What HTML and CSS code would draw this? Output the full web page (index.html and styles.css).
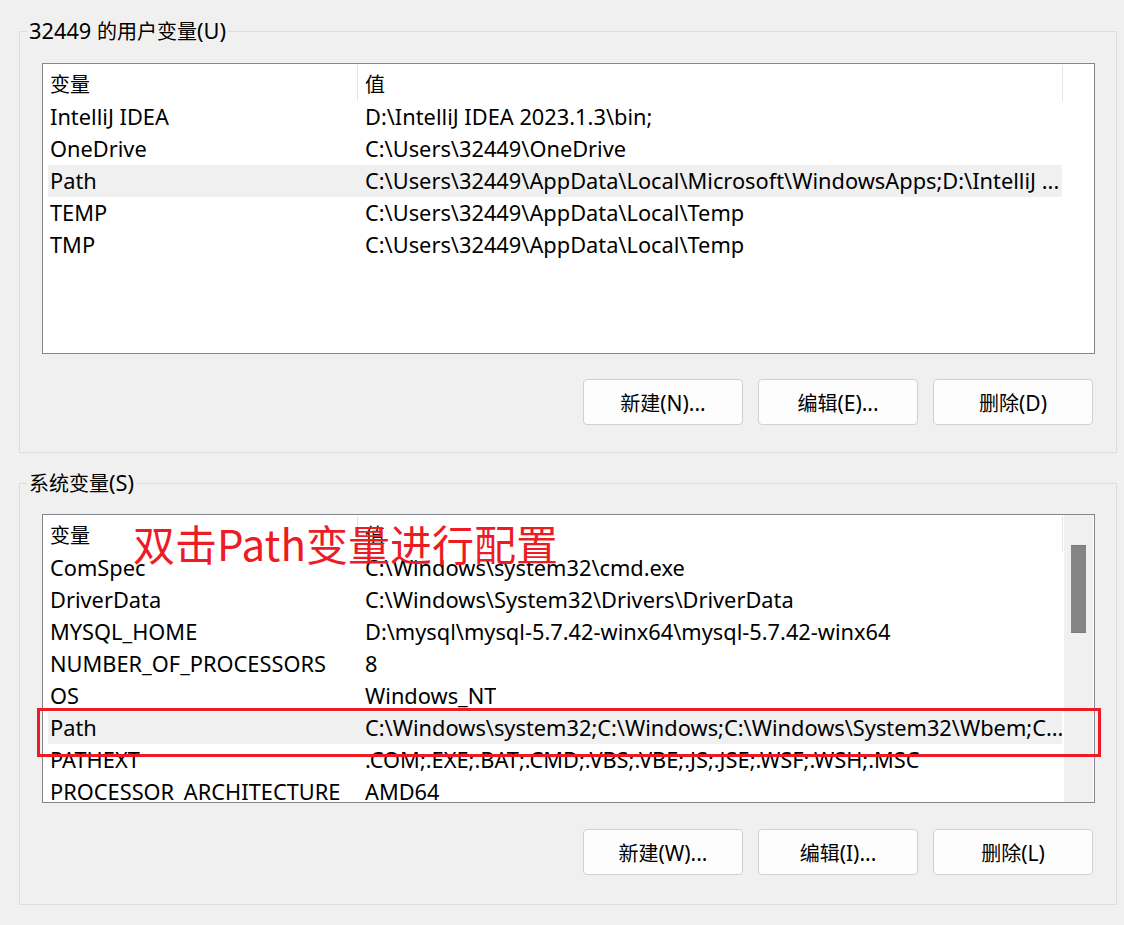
FILE: index.html
```html
<!DOCTYPE html>
<html lang="zh-CN">
<head>
<meta charset="utf-8">
<title>环境变量</title>
<link rel="stylesheet" href="styles.css">
</head>
<body>
<div class="page">
  <fieldset class="group group-user">
    <legend class="legend">32449 <span class="cjk">的用户变量</span>(U)</legend>
    <div class="listwrap">
      <div class="list list-user">
        <div class="list-body">
          <div class="header">
            <div class="hcell hcol1 cjk">变量</div>
            <div class="hcell hcol2 cjk">值</div>
            <div class="hfill"></div>
          </div>
          <div class="row"><span class="c1">IntelliJ IDEA</span><span class="c2">D:\IntelliJ IDEA 2023.1.3\bin;</span></div>
          <div class="row"><span class="c1">OneDrive</span><span class="c2">C:\Users\32449\OneDrive</span></div>
          <div class="row selected"><span class="c1">Path</span><span class="c2">C:\Users\32449\AppData\Local\Microsoft\WindowsApps;D:\IntelliJ ...</span></div>
          <div class="row"><span class="c1">TEMP</span><span class="c2">C:\Users\32449\AppData\Local\Temp</span></div>
          <div class="row"><span class="c1">TMP</span><span class="c2">C:\Users\32449\AppData\Local\Temp</span></div>
        </div>
      </div>
    </div>
    <div class="buttons">
      <button class="btn"><span class="cjk">新建</span>(N)...</button>
      <button class="btn"><span class="cjk">编辑</span>(E)...</button>
      <button class="btn"><span class="cjk">删除</span>(D)</button>
    </div>
  </fieldset>

  <fieldset class="group group-sys">
    <legend class="legend"><span class="cjk">系统变量</span>(S)</legend>
    <div class="listwrap">
      <div class="list list-sys">
        <div class="list-body">
          <div class="header">
            <div class="hcell hcol1 cjk">变量</div>
            <div class="hcell hcol2 cjk">值</div>
            <div class="hfill"></div>
          </div>
          <div class="row"><span class="c1">ComSpec</span><span class="c2">C:\Windows\system32\cmd.exe</span></div>
          <div class="row"><span class="c1">DriverData</span><span class="c2">C:\Windows\System32\Drivers\DriverData</span></div>
          <div class="row"><span class="c1">MYSQL_HOME</span><span class="c2">D:\mysql\mysql-5.7.42-winx64\mysql-5.7.42-winx64</span></div>
          <div class="row"><span class="c1">NUMBER_OF_PROCESSORS</span><span class="c2">8</span></div>
          <div class="row"><span class="c1">OS</span><span class="c2">Windows_NT</span></div>
          <div class="row selected"><span class="c1">Path</span><span class="c2">C:\Windows\system32;C:\Windows;C:\Windows\System32\Wbem;C...</span></div>
          <div class="row"><span class="c1">PATHEXT</span><span class="c2">.COM;.EXE;.BAT;.CMD;.VBS;.VBE;.JS;.JSE;.WSF;.WSH;.MSC</span></div>
          <div class="row"><span class="c1">PROCESSOR_ARCHITECTURE</span><span class="c2">AMD64</span></div>
        </div>
        <div class="scrollbar"><div class="thumb"></div></div>
      </div>
      <div class="note">双击Path变量进行配置</div>
      <div class="redbox"></div>
    </div>
    <div class="buttons">
      <button class="btn"><span class="cjk">新建</span>(W)...</button>
      <button class="btn"><span class="cjk">编辑</span>(I)...</button>
      <button class="btn"><span class="cjk">删除</span>(L)</button>
    </div>
  </fieldset>
</div>
</body>
</html>
```

FILE: styles.css
```css
html, body {
  margin: 0;
  padding: 0;
  background: #f0f0f0;
}
body {
  font-family: "Noto Sans", "Noto Sans CJK SC", sans-serif;
  font-size: 21.8px;
  color: #000;
}
.cjk {
  font-family: "Noto Sans CJK SC", sans-serif;
  font-size: 20px;
}
.page {
  padding: 19px 0 0 19px;
}
.group {
  box-sizing: border-box;
  width: 1098px;
  margin: 0;
  border: 1px solid #dcdcdc;
  padding: 20px 21px 27px 22px;
  min-width: 0;
}
.group-sys {
  margin-top: 18px;
  padding-top: 19px;
  padding-bottom: 29px;
}
.legend {
  margin-left: -15px;
  padding: 0 2px;
  line-height: 24px;
  height: 24px;
  font-size: 21.8px;
  white-space: nowrap;
}
.listwrap {
  position: relative;
}
.list {
  box-sizing: border-box;
  border: 1px solid #828790;
  background: #fff;
  overflow: hidden;
  display: flex;
}
.list-user {
  height: 291px;
}
.list-sys {
  height: 289px;
}
.list-body {
  flex: 1;
  min-width: 0;
}
.header {
  display: flex;
  height: 37px;
  box-sizing: border-box;
  padding-top: 1px;
}
.hcell {
  box-sizing: border-box;
  height: 36px;
  border-right: 1px solid #e5e5e5;
  padding-left: 7px;
  line-height: 38px;
  white-space: nowrap;
}
.hcol1 {
  width: 315px;
}
.hcol2 {
  width: 705px;
}
.hfill {
  flex: 1;
}
.row {
  display: flex;
  margin-left: 5px;
  width: 1014px;
  height: 32px;
  line-height: 32px;
  white-space: nowrap;
  overflow: hidden;
}
.row.selected {
  background: #f0f0f0;
}
.c1 {
  box-sizing: border-box;
  width: 309px;
  flex: none;
  padding-left: 2px;
  overflow: hidden;
}
.c2 {
  padding-left: 8px;
  overflow: hidden;
}
.scrollbar {
  width: 29px;
  flex: none;
  margin-right: 1px;
  background: #f0f0f0;
  display: flex;
  flex-direction: column;
  align-items: center;
}
.thumb {
  width: 15px;
  height: 88px;
  margin-top: 30px;
  background: #858585;
  border-top: 1px solid #7a7a7a;
  border-bottom: 1px solid #7a7a7a;
  box-sizing: border-box;
}
.note {
  position: absolute;
  left: 91px;
  top: 8px;
  font-family: "Noto Sans CJK SC", sans-serif;
  font-size: 42px;
  line-height: 42px;
  color: #ed1c24;
  white-space: nowrap;
}
.redbox {
  position: absolute;
  left: -5px;
  top: 194px;
  width: 1064px;
  height: 49px;
  box-sizing: border-box;
  border: 3px solid #ed1c24;
}
.buttons {
  display: flex;
  justify-content: flex-end;
  gap: 15px;
  margin-top: 25px;
  margin-right: 2px;
}
.group-sys .buttons {
  margin-top: 26px;
}
.btn {
  box-sizing: border-box;
  width: 160px;
  height: 46px;
  border: 1px solid #d0d0d0;
  border-radius: 4px;
  background: #fdfdfd;
  font-family: "Noto Sans", "Noto Sans CJK SC", sans-serif;
  font-size: 21px;
  color: #000;
  padding: 0;
}
```
